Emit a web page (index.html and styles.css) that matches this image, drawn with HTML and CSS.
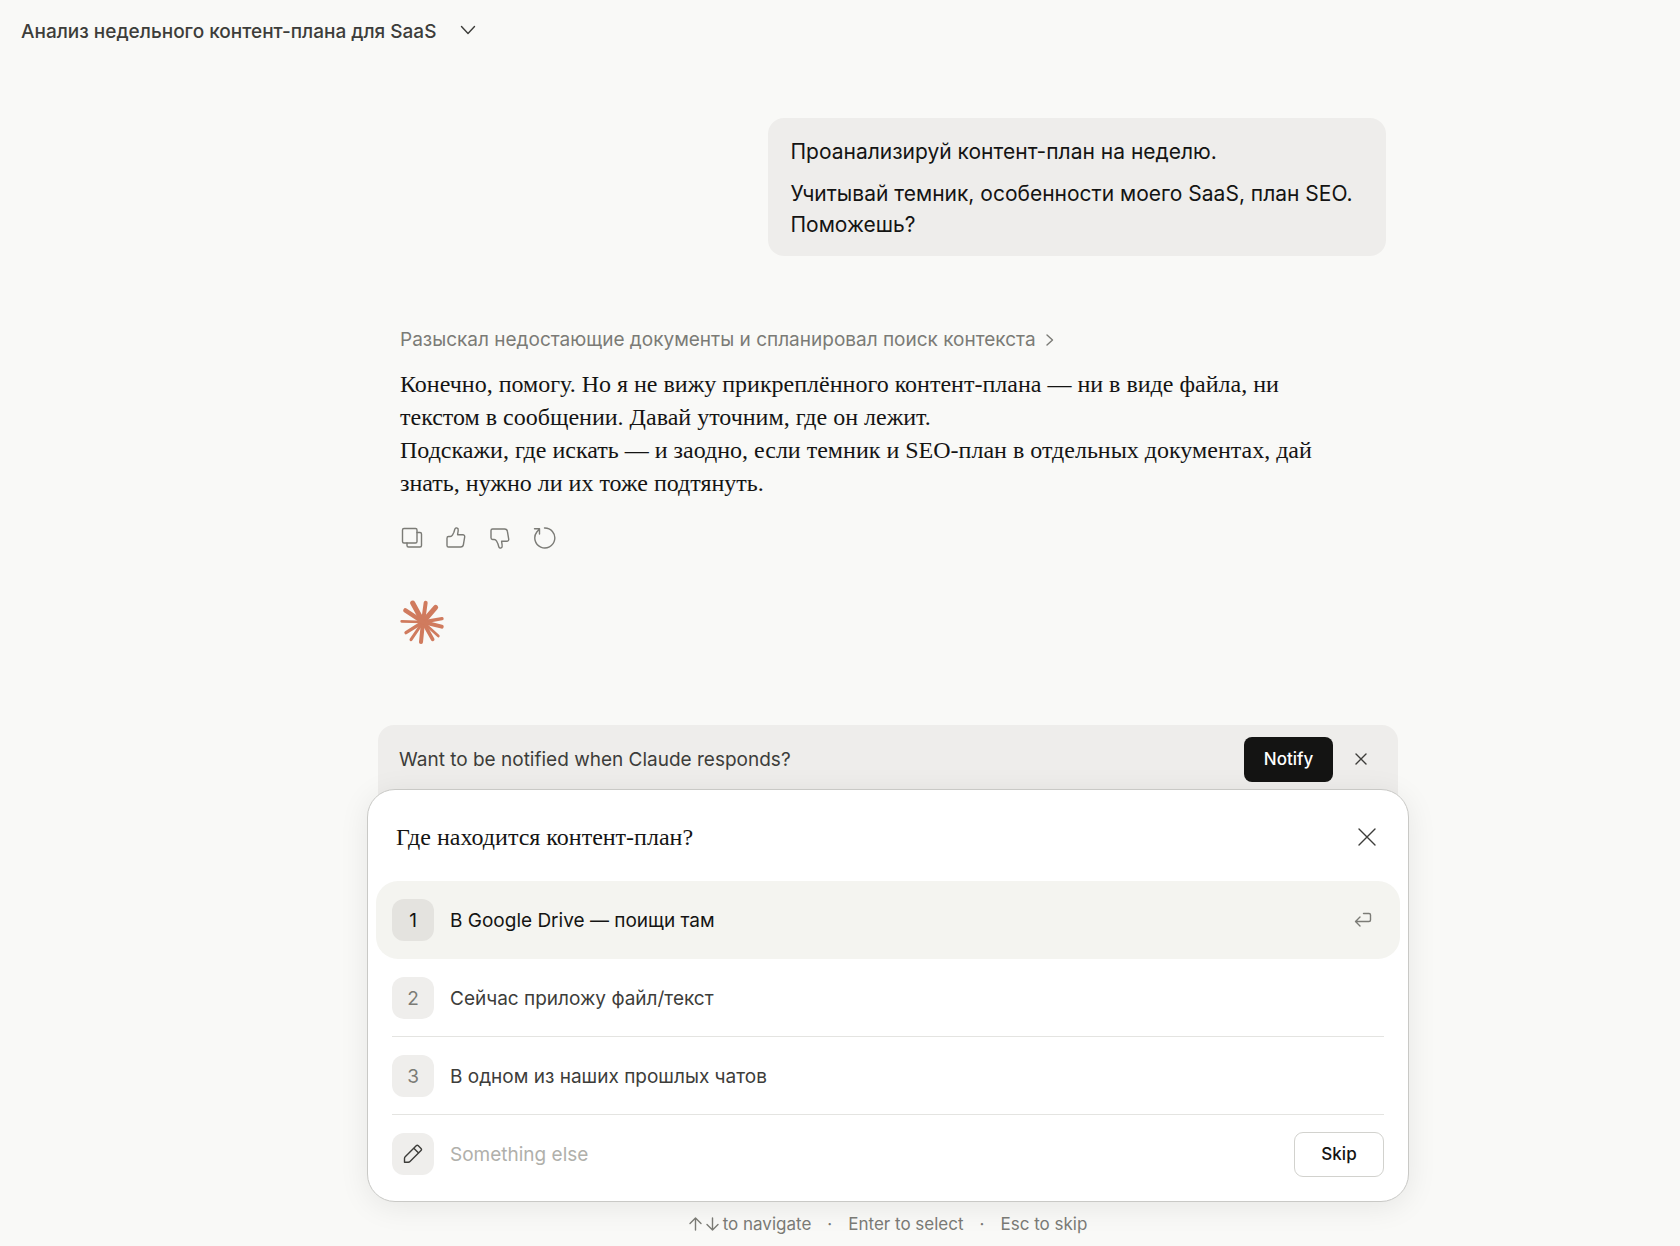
FILE: index.html
```html
<!DOCTYPE html>
<html lang="ru">
  <head>
    <meta charset="utf-8">
    <meta name="viewport" content="width=device-width, initial-scale=1">
    <title>Анализ недельного контент-плана для SaaS</title>
    <link rel="stylesheet" href="styles.css">
  </head>
  <body>
    <header class="topbar">
      <h1 class="chat-title">Анализ недельного контент-плана для SaaS</h1>
      <button class="icon-btn" type="button" aria-label="Chat menu">
        <svg width="16" height="16" viewBox="0 0 16 16"><path d="M1.500 3.500 8 10.500l6.500-7"/></svg>
      </button>
    </header>

    <main class="chat">
      <section class="thread">
        <div class="bubble">
          <p>Проанализируй контент-план на неделю.</p>
          <p>Учитывай темник, особенности моего SaaS, план SEO.<br>Поможешь?</p>
        </div>

        <article class="reply">
          <button class="thoughts" type="button">
            Разыскал недостающие документы и спланировал поиск контекста
            <svg width="8" height="12" viewBox="0 0 8 12"><path d="m1 1 5.500 5L1 11"/></svg>
          </button>
          <div class="reply-text">
            <p>Конечно, помогу. Но я не вижу прикреплённого контент-плана — ни в виде файла, ни<br>текстом в сообщении. Давай уточним, где он лежит.</p>
            <p>Подскажи, где искать — и заодно, если темник и SEO-план в отдельных документах, дай<br>знать, нужно ли их тоже подтянуть.</p>
          </div>
          <div class="actions">
            <button class="icon-btn" type="button" aria-label="Copy">
              <svg width="24" height="24" viewBox="0 0 24 24"><rect x="2.500" y="2.500" width="14.500" height="14.500" rx="1.500"/><path d="M17 6.500h3a1.500 1.500 0 0 1 1.500 1.500v11.500a1.500 1.500 0 0 1-1.500 1.500H8.500A1.500 1.500 0 0 1 7 19.500V17"/></svg>
            </button>
            <button class="icon-btn" type="button" aria-label="Good response">
              <svg width="24" height="24" viewBox="0 0 24 24"><path d="M3 12.200c0-1 .6-1.700 1.600-1.700h1.600c1 0 1.700-.4 2.200-1.300l1.500-3 .9-2.900c.4-1.200 1.200-1.600 2.100-1.300 1 .3 1.500 1.200 1.300 2.300l-.6 4.400h5.200c1.300 0 2.100 1 1.900 2.200l-1.300 7.700c-.2 1.500-1.300 2.400-2.800 2.400H4.600c-1 0-1.600-.6-1.600-1.600z"/></svg>
            </button>
            <button class="icon-btn" type="button" aria-label="Bad response">
              <svg width="24" height="24" viewBox="0 0 24 24"><path d="M3 11.800c0 1 .6 1.700 1.600 1.700h1.600c1 0 1.700.4 2.200 1.300l1.500 3 .9 2.900c.4 1.200 1.200 1.600 2.100 1.300 1-.3 1.500-1.200 1.300-2.300l-.6-4.400h5.200c1.300 0 2.100-1 1.900-2.200l-1.300-7.700C19.200 3.900 18.100 3 16.600 3h-12C3.600 3 3 3.600 3 4.600z"/></svg>
            </button>
            <button class="icon-btn" type="button" aria-label="Retry">
              <svg width="24" height="24" viewBox="0 0 24 24"><path d="M12.500 2a10 10 0 1 1-7.700 4L7.500 3M2.500 2.700h5V8"/></svg>
            </button>
          </div>
          <svg class="spark" width="44" height="44" viewBox="0 0 132 132">
            <circle cx="69" cy="66" r="11"/>
            <path stroke-width="15" d="M69 66 38 9"/>
            <path stroke-width="12" d="m69 66 8-58"/>
            <path stroke-width="15" d="m69 66 38-44"/>
            <path stroke-width="10" d="m69 66 57-10"/>
            <path stroke-width="12" d="m69 66 56 14"/>
            <path stroke-width="8" d="m69 66 46 42"/>
            <path stroke-width="11" d="m69 66 29 52"/>
            <path stroke-width="12" d="m69 66-6 60"/>
            <path stroke-width="9" d="m69 66-36 53"/>
            <path stroke-width="10" d="M69 66 18 98"/>
            <path stroke-width="8" d="M69 66 5 64"/>
            <path stroke-width="13" d="M69 66 16 31"/>
          </svg>
        </article>
      </section>

      <section class="dock">
        <div class="notice">
          <p>Want to be notified when Claude responds?</p>
          <button class="notify-btn" type="button">Notify</button>
          <button class="icon-btn notice-close" type="button" aria-label="Dismiss">
            <svg width="12" height="12" viewBox="0 0 12 12"><path d="m1 1 10 10M11 1 1 11"/></svg>
          </button>
        </div>

        <form class="card">
          <div class="card-head">
            <h2>Где находится контент-план?</h2>
            <button class="icon-btn" type="button" aria-label="Close">
              <svg width="18" height="18" viewBox="0 0 18 18"><path d="m1 1 16 16M17 1 1 17"/></svg>
            </button>
          </div>
          <button class="option selected" type="button">
            <span class="badge">1</span>
            <span class="label">В Google Drive — поищи там</span>
            <svg class="enter" width="18" height="16" viewBox="0 0 18 16"><path d="M9.500 1.500H15A1.500 1.500 0 0 1 16.500 3v5A1.500 1.500 0 0 1 15 9.500H2M6 5 1.500 9.500 6 14"/></svg>
          </button>
          <button class="option" type="button">
            <span class="badge">2</span>
            <span class="label">Сейчас приложу файл/текст</span>
          </button>
          <button class="option" type="button">
            <span class="badge">3</span>
            <span class="label">В одном из наших прошлых чатов</span>
          </button>
          <div class="option other">
            <label class="badge" for="other">
              <svg width="20" height="20" viewBox="0 0 20 20"><path d="M13.200 1.800a1.500 1.500 0 0 1 2.100 0l2.700 2.700a1.500 1.500 0 0 1 0 2.100L7 17.600c-.5.500-1 .7-1.700.7H1.500v-3.800c0-.7.200-1.200.7-1.700zM10.800 4.200 15.600 9"/></svg>
            </label>
            <input id="other" type="text" placeholder="Something else" aria-label="Something else">
            <button class="skip-btn" type="button">Skip</button>
          </div>
        </form>

        <p class="hints">
          <span class="keys">
            <svg width="13" height="14" viewBox="0 0 13 14"><path d="M6.500 13V1M1 6.500 6.500 1 12 6.500"/></svg>
            <svg width="13" height="14" viewBox="0 0 13 14"><path d="M6.500 1v12M1 7.500 6.500 13 12 7.500"/></svg>
            to navigate
          </span>
          <span>·</span>
          <span>Enter to select</span>
          <span>·</span>
          <span>Esc to skip</span>
        </p>
      </section>
    </main>
  </body>
</html>
```
FILE: styles.css
```css
* {
  box-sizing: border-box;
}
body {
  margin: 0;
  min-height: 100vh;
  display: flex;
  flex-direction: column;
  background: #f9f9f7;
  color: #141413;
  font-family: Inter, "Noto Sans", sans-serif;
  font-size: 19px;
}
h1,
h2,
p {
  margin: 0;
}
button {
  border: none;
  padding: 0;
  background: none;
  color: inherit;
  font: inherit;
  cursor: pointer;
}
svg {
  display: block;
  flex: none;
  fill: none;
  stroke: currentColor;
  stroke-width: 1.4;
  stroke-linecap: round;
  stroke-linejoin: round;
}
.icon-btn {
  display: flex;
  align-items: center;
  justify-content: center;
  color: #3d3d3a;
}

.topbar {
  display: flex;
  align-items: center;
  gap: 24px;
  height: 62px;
  padding: 0 21px;
  color: #3d3d3a;
}
.chat-title {
  font-size: 19px;
  font-weight: 500;
}

.chat {
  flex: 1;
  display: flex;
  flex-direction: column;
  justify-content: space-between;
  align-items: center;
  padding: 56px 0 10px 96px;
}
.thread {
  width: 100%;
  max-width: 996px;
  display: flex;
  flex-direction: column;
}
.bubble {
  align-self: flex-end;
  display: flex;
  flex-direction: column;
  gap: 11px;
  width: 62%;
  padding: 18px 22px 16px;
  border-radius: 16px;
  background: #eeedeb;
  font-size: 21px;
  line-height: 31px;
}
.reply {
  display: flex;
  flex-direction: column;
  align-items: flex-start;
  padding: 69px 10px 0;
}
.thoughts {
  display: flex;
  align-items: center;
  gap: 10px;
  color: #7b7b76;
  line-height: 30px;
}
.reply-text {
  padding-top: 13px;
  font-family: "Liberation Serif", serif;
  font-size: 24px;
  line-height: 33px;
}
.actions {
  display: flex;
  gap: 20px;
  padding-top: 26px;
}
.actions .icon-btn {
  color: #7b7b76;
}
.spark {
  margin-top: 50px;
  color: #d07b5e;
}
.spark circle {
  fill: currentColor;
}

.dock {
  width: 100%;
  max-width: 1042px;
}
.notice {
  display: flex;
  align-items: center;
  height: 92px;
  margin: 0 11px -28px;
  padding: 0 31px 24px 21px;
  border-radius: 16px 16px 0 0;
  background: #eeedeb;
  color: #3d3d3a;
}
.notice p {
  flex: 1;
}
.notify-btn {
  width: 89px;
  height: 45px;
  border-radius: 8px;
  background: #141413;
  color: #fff;
  font-size: 17px;
  font-weight: 500;
}
.notice-close {
  margin-left: 22px;
}
.card {
  position: relative;
  padding: 0 8px 8px;
  border: 1px solid #c9c9c6;
  border-radius: 28px;
  background: #fff;
  box-shadow: 0 5px 30px rgba(0, 0, 0, 0.08);
}
.card-head {
  display: flex;
  align-items: center;
  justify-content: space-between;
  height: 91px;
  padding: 3px 24px 0 20px;
}
.card-head h2 {
  font-family: "Liberation Serif", serif;
  font-size: 24px;
  font-weight: 400;
}
.option {
  position: relative;
  display: flex;
  align-items: center;
  gap: 16px;
  width: 100%;
  height: 78px;
  padding: 0 16px;
  color: #3d3d3a;
  font-size: 19px;
  text-align: left;
}
.option.selected {
  border-radius: 22px;
  background: #f4f4f0;
  color: #141413;
}
/* divider under the plain options, inset to the badge */
.option:not(.selected):not(.other)::after {
  content: "";
  position: absolute;
  left: 16px;
  right: 16px;
  bottom: 0;
  border-bottom: 1px solid #e4e4e1;
}
.badge {
  display: flex;
  align-items: center;
  justify-content: center;
  width: 42px;
  height: 42px;
  border-radius: 12px;
  background: #efeeec;
  color: #7b7b76;
}
.selected .badge {
  background: #e4e3df;
  color: #141413;
}
.other .badge {
  color: #3d3d3a;
}
.label {
  flex: 1;
}
.enter {
  margin-right: 12px;
  color: #7b7b76;
}
.option input {
  flex: 1;
  min-width: 0;
  padding: 0;
  border: none;
  outline: none;
  background: none;
  color: #141413;
  font: inherit;
}
.option input::placeholder {
  color: #b0b0ab;
}
.skip-btn {
  width: 90px;
  height: 45px;
  border: 1px solid #d2d2ce;
  border-radius: 9px;
  background: #fff;
  color: #141413;
  font-size: 17px;
  font-weight: 500;
}

.hints {
  display: flex;
  justify-content: center;
  gap: 16px;
  padding-top: 10px;
  color: #7b7b76;
  font-size: 17px;
  line-height: 24px;
}
.keys {
  display: flex;
  align-items: center;
  gap: 4px;
}
```
